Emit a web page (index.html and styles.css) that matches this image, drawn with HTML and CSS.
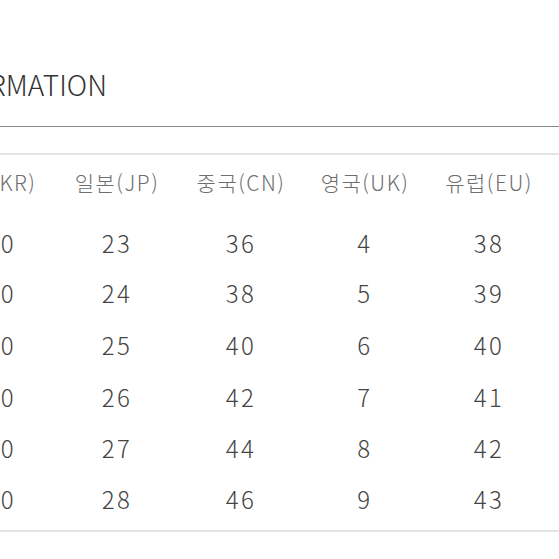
FILE: index.html
```html
<!DOCTYPE html>
<html lang="ko">
<head>
<meta charset="utf-8">
<link rel="stylesheet" href="styles.css">
</head>
<body>
<div class="page">
  <div class="title-bar">
    <h2 class="title">SIZE INFORMATION</h2>
  </div>
  <div class="size-table">
    <table>
      <thead>
        <tr><th>한국(KR)</th><th>일본(JP)</th><th>중국(CN)</th><th>영국(UK)</th><th>유럽(EU)</th><th>미국(US)</th></tr>
      </thead>
      <tbody>
        <tr><td>230</td><td>23</td><td>36</td><td>4</td><td>38</td><td>5</td></tr>
        <tr><td>240</td><td>24</td><td>38</td><td>5</td><td>39</td><td>6</td></tr>
        <tr><td>250</td><td>25</td><td>40</td><td>6</td><td>40</td><td>7</td></tr>
        <tr><td>260</td><td>26</td><td>42</td><td>7</td><td>41</td><td>8</td></tr>
        <tr><td>270</td><td>27</td><td>44</td><td>8</td><td>42</td><td>9</td></tr>
        <tr><td>280</td><td>28</td><td>46</td><td>9</td><td>43</td><td>10</td></tr>
      </tbody>
    </table>
  </div>
</div>
</body>
</html>
```

FILE: styles.css
```css
html, body {
  margin: 0;
  padding: 0;
  background: #ffffff;
}
body {
  width: 559px;
  height: 559px;
  overflow: hidden;
  font-family: "Noto Sans CJK KR", "Noto Sans", sans-serif;
}
.page {
  width: 559px;
}
.title-bar {
  padding-top: 64px;
  padding-bottom: 22px;
  border-bottom: 1px solid #888888;
  white-space: nowrap;
}
.title {
  margin: 0 0 0 -138px;
  font-size: 28px;
  line-height: 40px;
  font-weight: 300;
  color: #333333;
  letter-spacing: 0;
}
.size-table {
  margin-top: 26px;
  margin-left: -69px;
  width: 744px;
  border-top: 2px solid #e4e4e4;
  border-bottom: 2px solid #e4e4e4;
  padding-bottom: 7px;
}
table {
  width: 744px;
  table-layout: fixed;
  border-collapse: collapse;
}
th, td {
  width: 124px;
  padding: 0;
  text-align: center;
  vertical-align: middle;
  white-space: nowrap;
}
th {
  height: 54px;
  padding-bottom: 8px;
  font-size: 21px;
  font-weight: 300;
  color: #6e6e6e;
  letter-spacing: 1.5px;
}
td {
  height: 51px;
  font-size: 24px;
  font-weight: 300;
  color: #444444;
  letter-spacing: 2.5px;
}
tbody tr:nth-child(1) td { height: 50px; }
tbody tr:nth-child(2) td { height: 51px; }
tbody tr:nth-child(3) td { height: 52px; }
tbody tr:nth-child(4) td { height: 52px; }
tbody tr:nth-child(5) td { height: 51px; }
tbody tr:nth-child(6) td { height: 50px; }
```
